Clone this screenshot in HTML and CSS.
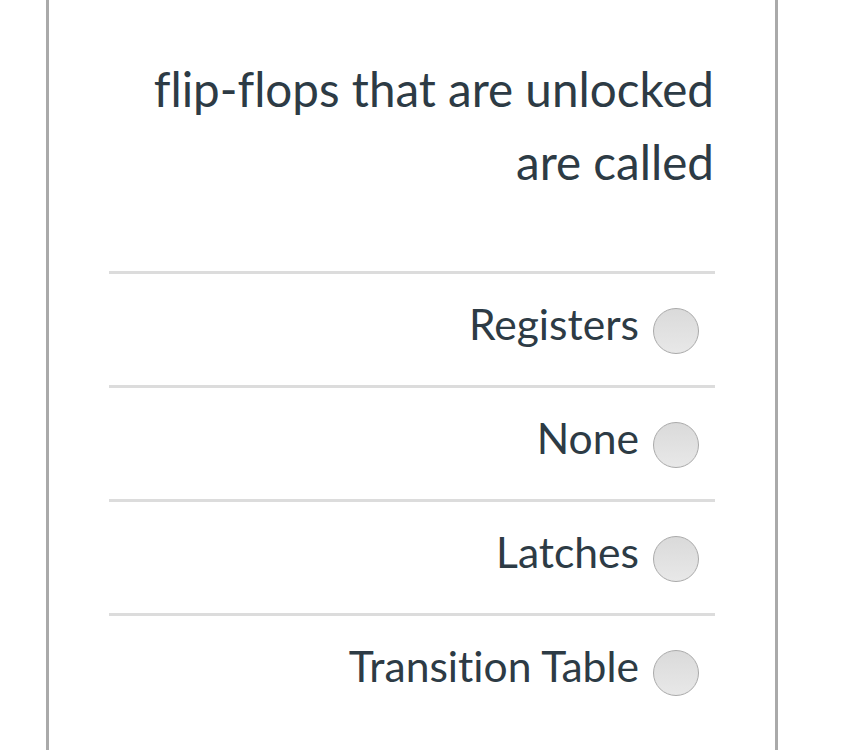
FILE: index.html
```html
<!DOCTYPE html>
<html lang="en">
<head>
<meta charset="utf-8">
<title>Quiz question</title>
<link rel="stylesheet" href="styles.css">
</head>
<body>
<div class="card">
  <div class="question">flip-flops that are unlocked are called</div>
  <ul class="answers">
    <li class="answer"><label class="answer-label"><span class="answer-text">Registers</span><span class="radio"></span></label></li>
    <li class="answer"><label class="answer-label"><span class="answer-text">None</span><span class="radio"></span></label></li>
    <li class="answer"><label class="answer-label"><span class="answer-text">Latches</span><span class="radio"></span></label></li>
    <li class="answer"><label class="answer-label"><span class="answer-text">Transition Table</span><span class="radio"></span></label></li>
  </ul>
</div>
</body>
</html>
```
FILE: styles.css
```css
html, body {
  margin: 0;
  padding: 0;
  background: #ffffff;
}
body {
  font-family: Lato, "Liberation Sans", sans-serif;
  color: #2d3b45;
  font-variant-ligatures: no-common-ligatures;
}
.card {
  box-sizing: border-box;
  margin-left: 46px;
  width: 732px;
  min-height: 750px;
  border-left: 3px solid #aaaaaa;
  border-right: 3px solid #aaaaaa;
  padding: 52px 60px 0 60px;
}
.question {
  text-align: right;
  font-size: 47.6px;
  line-height: 73px;
  padding-right: 1px;
  margin-bottom: 73px;
}
.answers {
  list-style: none;
  margin: 0;
  padding: 0;
}
.answer {
  border-top: 3px solid #dcdcdc;
  height: 111px;
}
.answer-label {
  display: flex;
  justify-content: flex-end;
  align-items: center;
  height: 100%;
  padding-right: 16px;
  gap: 14px;
  font-size: 42.6px;
}
.answer-text {
  line-height: 1;
  padding-bottom: 10px;
}
.radio {
  box-sizing: border-box;
  width: 46px;
  height: 46px;
  border-radius: 50%;
  border: 1px solid #aaaaaa;
  background: linear-gradient(#dadada, #e8e8e8);
  margin-top: 2px;
}
```
